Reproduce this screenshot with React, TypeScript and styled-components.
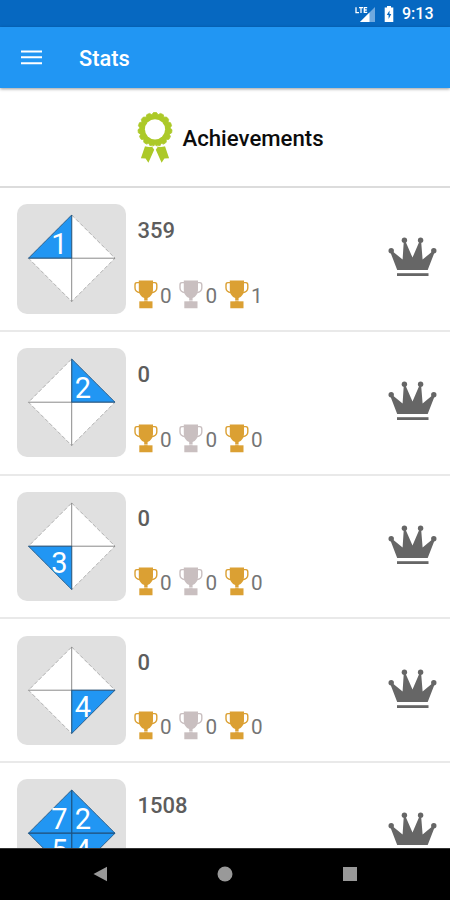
import React from "react";
import styled, { createGlobalStyle } from "styled-components";

const GlobalStyle = createGlobalStyle`
  *, *::before, *::after { box-sizing: border-box; }
  body { margin: 0; background: #fff; font-family: Roboto, sans-serif; }
`;

const Screen = styled.div`
  width: 450px;
  height: 900px;
  display: flex;
  flex-direction: column;
  overflow: hidden;
  background: #fff;
`;

const StatusBar = styled.div`
  flex: none;
  height: 27px;
  display: flex;
  align-items: center;
  justify-content: flex-end;
  gap: 8px;
  padding: 1px 17px 0 0;
  background: #0668c1;
  color: #fff;
`;

const Clock = styled.span`
  width: 31px;
  font-size: 16px;
  line-height: 26px;
  font-weight: 500;
  white-space: nowrap;
`;

const AppBar = styled.header`
  flex: none;
  height: 61px;
  display: flex;
  align-items: center;
  gap: 36px;
  padding: 0 21px;
  background: #2196f3;
  box-shadow: 0 1px 3px rgba(0, 0, 0, 0.4);
  z-index: 1;
`;

const Title = styled.h1`
  margin: 2px 0 0;
  color: #fff;
  font-size: 21.8px;
  line-height: 26px;
  font-weight: 500;
`;

const AchievementsButton = styled.div`
  flex: none;
  height: 100px;
  display: flex;
  align-items: center;
  padding: 2px 0 0 137px;
  gap: 9.5px;
  border-bottom: 2px solid #dcdcdc;
  color: #0c0c0c;
  font-size: 22.2px;
  font-weight: 500;
`;

const List = styled.main`
  flex: 1;
  min-height: 0;
  overflow: hidden;
`;

const Row = styled.section`
  height: 143.75px;
  display: flex;
  align-items: flex-start;
  padding: 16.3px 13px 0 17px;
  border-bottom: 2px solid #e9e9e9;
`;

const Tile = styled.div`
  flex: none;
  width: 109.4px;
  height: 109.4px;
  border-radius: 10px;
  background: #e0e0e0;
`;

const Details = styled.div`
  flex: 1;
  display: flex;
  flex-direction: column;
  padding: 13px 0 0 7.6px;
`;

const Score = styled.div`
  padding-left: 3.5px;
  color: #5d5d5d;
  font-size: 22px;
  line-height: 28px;
  font-weight: 500;
`;

const Trophies = styled.div`
  display: flex;
  margin-top: 34.5px;
`;

const TrophyCount = styled.div`
  width: 45.5px;
  display: flex;
  gap: 2px;
  color: #757575;
  font-size: 20.7px;
  line-height: 32px;
`;

const CrownSlot = styled.div`
  flex: none;
  padding-top: 33px;
`;

const NavBar = styled.nav`
  flex: none;
  height: 52px;
  display: grid;
  grid-template-columns: repeat(3, 124.5px);
  justify-content: center;
  align-items: center;
  justify-items: center;
  padding-bottom: 2px;
  background: #000;
  border-top: 1px solid #333;
`;

type Quad = 0 | 1 | 2 | 3;
type Cell = string | null;

const QUADS: Record<Quad, { points: string; x: number; y: number }> = {
  0: { points: "54.7,54.2 54.7,11 11.5,54.2", x: 42.3, y: 50.3 },
  1: { points: "54.7,54.2 54.7,11 98,54.2", x: 65.8, y: 50.3 },
  2: { points: "54.7,54.2 54.7,97.5 11.5,54.2", x: 42.3, y: 81 },
  3: { points: "54.7,54.2 54.7,97.5 98,54.2", x: 65.8, y: 81 },
};

const Diamond = ({ cells }: { cells: Cell[] }) => (
  <svg width="109.5" height="109.5" viewBox="0 0 109.5 109.5" display="block">
    {cells.map((c, i) => (
      <polygon key={i} points={QUADS[i as Quad].points} fill={c ? "#2196f3" : "#fff"} />
    ))}
    <path d="M54.7 11L98 54.2L54.7 97.5L11.5 54.2Z" fill="none" stroke="#888" strokeWidth="0.6" strokeDasharray="4 2" />
    <path d="M54.7 11V97.5M11.5 54.2H98" stroke="#555" strokeOpacity="0.75" strokeWidth="0.9" />
    {cells.map((c, i) =>
      c ? (
        <g key={i}>
          <polygon points={QUADS[i as Quad].points} fill="none" stroke="#17578e" strokeWidth="0.8" />
          <text x={QUADS[i as Quad].x} y={QUADS[i as Quad].y} textAnchor="middle" fill="#fff" fontFamily="Roboto, sans-serif" fontSize="29">
            {c}
          </text>
        </g>
      ) : null
    )}
  </svg>
);

const Trophy = ({ color }: { color: string }) => (
  <svg width="24" height="29" viewBox="0 0 24 29" fill={color}>
    <path d="M4.8 .5H19V9.5C19 14 16.5 17 13.6 18V21.3H18.5V28.3H5.3V21.3H10.2V18C7.3 17 4.8 14 4.8 9.5Z" />
    <path d="M5.3 2.6H2.9C1.4 2.6 1 3.4 1 5V8C1 10.8 3.3 12.3 6.3 12.9M18.5 2.6H20.9C22.4 2.6 22.8 3.4 22.8 5V8C22.8 10.8 20.5 12.3 17.5 12.9" fill="none" stroke={color} strokeWidth="1.4" />
    <path d="M5 20.7H19" stroke="#fff" strokeOpacity="0.55" strokeWidth="1" />
  </svg>
);

const Crown = () => (
  <svg width="49" height="41" viewBox="0 0 49 41" fill="#666" display="block">
    <path d="M3 13L14.6 22.6L15.8 3.8H17.2L24.5 20.6L31.7 3.8H33.1L34.6 22.6L46 13L47 14.2L39.7 33H9.2L2 14.2Z" />
    <circle cx="3.2" cy="13.8" r="2.7" />
    <circle cx="16.4" cy="3.2" r="2.7" />
    <circle cx="32.6" cy="3.2" r="2.7" />
    <circle cx="45.8" cy="13.8" r="2.7" />
    <rect x="9" y="36.2" width="31.5" height="2.8" />
  </svg>
);

const SCALLOPS = Array.from({ length: 15 }, (_, i) => {
  const point = (r: number, offset: number) => {
    const a = ((i + offset) / 15) * Math.PI * 2 - Math.PI / 2;
    return `${(18 + r * Math.cos(a)).toFixed(2)},${(17.5 + r * Math.sin(a)).toFixed(2)}`;
  };
  return `${point(15.1, -0.5)} ${point(17, -0.22)} ${point(17, 0.22)}`;
}).join(" ");

const Rosette = () => (
  <svg width="36" height="52" viewBox="0 0 36 52">
    <path d="M8 34.2L3.9 46.2L8.6 46.6L11.4 50.8L17.2 37.8L15 34.5ZM28 34.2L32.1 46.2L27.4 46.6L24.6 50.8L18.8 37.8L21 34.5Z" fill="#acc928" />
    <polygon points={SCALLOPS} fill="#acc928" stroke="#acc928" strokeWidth="0.8" strokeLinejoin="round" />
    <path d="M7 33.4L12 34.6L15.5 34.2L18 35.7L20.5 34.2L24 34.6L29 33.4" fill="none" stroke="#fff" strokeWidth="0.9" />
    <circle cx="18" cy="17.3" r="10.1" fill="#fff" />
  </svg>
);

const MenuIcon = () => (
  <svg width="22" height="16" viewBox="0 0 22 16">
    <path d="M0 1.4H21M0 7.3H21M0 13.3H21" stroke="#fff" strokeWidth="2" />
  </svg>
);

const SignalIcon = () => (
  <svg width="21" height="17" viewBox="0 0 21 17">
    <path d="M20 1V16H5Z" fill="#6fa9df" />
    <path d="M14.5 6.5V16H5Z" fill="#fff" />
    <path d="M1 1.3V6.7H4M4 1.7H8M6 1.7V7M12.2 1.7H9.3V6.3H12.2M9.3 4H11.8" fill="none" stroke="#fff" strokeWidth="1.3" />
  </svg>
);

const BatteryIcon = () => (
  <svg width="10" height="16" viewBox="0 0 10 16">
    <path d="M3 0H7V1.6H9.3V16H.7V1.6H3Z" fill="#fff" />
    <path d="M5.5 4.5L2.8 9H4.6V13L7.3 8H5.5Z" fill="#0668c1" />
  </svg>
);

const GOLD = "#dba033";
const SILVER = "#c9bfc0";
const BRONZE = "#dba033";

const STATS: { score: string; cells: Cell[]; trophies: number[] }[] = [
  { score: "359", cells: ["1", null, null, null], trophies: [0, 0, 1] },
  { score: "0", cells: [null, "2", null, null], trophies: [0, 0, 0] },
  { score: "0", cells: [null, null, "3", null], trophies: [0, 0, 0] },
  { score: "0", cells: [null, null, null, "4"], trophies: [0, 0, 0] },
  { score: "1508", cells: ["7", "2", "5", "4"], trophies: [0, 0, 0] },
];

export default function App() {
  return (
    <Screen>
      <GlobalStyle />
      <StatusBar>
        <SignalIcon />
        <BatteryIcon />
        <Clock>9:13</Clock>
      </StatusBar>
      <AppBar>
        <MenuIcon />
        <Title>Stats</Title>
      </AppBar>
      <AchievementsButton>
        <Rosette />
        Achievements
      </AchievementsButton>
      <List>
        {STATS.map((s, i) => (
          <Row key={i}>
            <Tile>
              <Diamond cells={s.cells} />
            </Tile>
            <Details>
              <Score>{s.score}</Score>
              <Trophies>
                {[GOLD, SILVER, BRONZE].map((color, t) => (
                  <TrophyCount key={t}>
                    <Trophy color={color} />
                    {s.trophies[t]}
                  </TrophyCount>
                ))}
              </Trophies>
            </Details>
            <CrownSlot>
              <Crown />
            </CrownSlot>
          </Row>
        ))}
      </List>
      <NavBar>
        <svg width="15" height="16" viewBox="0 0 15 16">
          <path d="M.5 8L14 .8V15.2Z" fill="#999" />
        </svg>
        <svg width="16" height="16" viewBox="0 0 16 16">
          <circle cx="8" cy="8" r="7.5" fill="#999" />
        </svg>
        <svg width="14" height="14" viewBox="0 0 14 14">
          <rect width="14" height="14" fill="#999" />
        </svg>
      </NavBar>
    </Screen>
  );
}
